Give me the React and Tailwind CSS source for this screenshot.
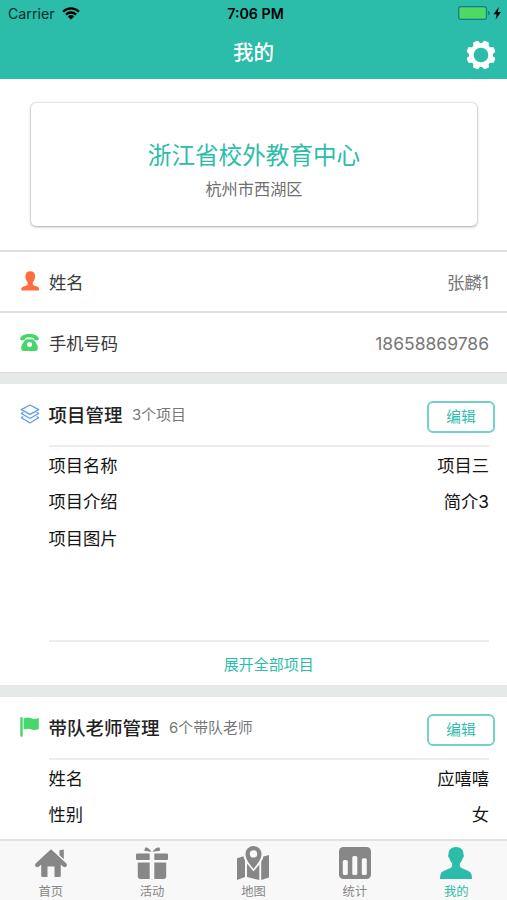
import React, { useState } from 'react';

const UserIcon = ({ className }) => (
  <svg viewBox="0 0 32 32" fill="currentColor" className={className}>
    <path d="M16 0C11.300 0 8.300 2.900 8.600 7.200C8 7.500 8 9.300 8.500 10.300C8.800 11 9.300 11.200 9.500 11.600C10 13.700 10.900 15 12 16.100C12.300 17.900 12.200 19.500 11.300 20.600C8.500 22.600 1.800 23.600 .6 27.200C.1 28.900 0 30.500 0 32H32C32 30.500 31.900 28.900 31.400 27.200C30.200 23.600 23.500 22.600 20.700 20.600C19.800 19.500 19.700 17.900 20 16.100C21.100 15 22 13.700 22.500 11.600C22.700 11.200 23.200 11 23.500 10.300C24 9.300 24 7.500 23.400 7.200C23.700 2.900 20.700 0 16 0Z" />
  </svg>
);

const PersonIcon = () => (
  <svg viewBox="0 0 18 20" fill="currentColor" className="ml-[0.500px] mb-[4px] w-[18.500px] h-5 text-[#ff6c3e]">
    <path d="M9 .2C6 .2 4.200 2 4.200 5C4.200 8 5.100 10 6.400 11.200V13.300C6.400 14.500 5 14.800 3 15.300C1 15.800 0 16.900 0 18.300C0 19.200 .3 19.600 1 19.600H17C17.700 19.600 18 19.200 18 18.300C18 16.900 17 15.800 15 15.300C13 14.800 11.600 14.500 11.600 13.300V11.200C12.900 10 13.800 8 13.800 5C13.800 2 12 .2 9 .2Z" />
  </svg>
);

const PhoneIcon = () => (
  <svg viewBox="0 0 19 17" fill="currentColor" className="mb-[3px] w-[19px] h-[17px] text-[#46d66c]">
    <path d="M9.500 0C4.200 0 .8 2 .2 4.500C0 5.700 .5 6.200 1.300 6.200H3.800C4.700 6.200 5 5.600 5.100 4.700C5.200 4 7 3.600 9.500 3.600C12 3.600 13.800 4 13.900 4.700C14 5.600 14.300 6.200 15.200 6.200H17.700C18.500 6.200 19 5.700 18.800 4.500C18.200 2 14.800 0 9.500 0Z" />
    <path
      fillRule="evenodd"
      d="M7 5.300H12C13.500 5.300 14.300 6.800 15.500 8.300C17 10.200 17.800 11.800 17.800 14C17.800 16 17 17 15.200 17H3.800C2 17 1.200 16 1.200 14C1.200 11.800 2 10.200 3.500 8.300C4.700 6.800 5.500 5.300 7 5.300ZM9.500 8A2.500 2.500 0 1 0 9.500 13A2.500 2.500 0 1 0 9.500 8Z"
    />
  </svg>
);

const LayersIcon = () => (
  <svg
    viewBox="0 0 20 20"
    fill="none"
    stroke="currentColor"
    strokeWidth="1.200"
    strokeLinejoin="round"
    strokeLinecap="round"
    className="mb-[2px] w-5 h-5 text-[#5b9bf0]"
  >
    <path d="M10 1L18.700 5.600L10 10.400L1.300 5.600Z" />
    <path d="M3 8.500L1.300 9.500L10 14.500L18.700 9.500L17 8.500" />
    <path d="M3 12.800L1.300 13.800L10 19L18.700 13.800L17 12.800" />
  </svg>
);

const FlagIcon = () => (
  <svg viewBox="0 0 19 20" fill="currentColor" className="mb-[2px] w-[19px] h-5 text-[#46d66c]">
    <rect x="0.300" y="0.300" width="2.400" height="19.400" rx="0.600" />
    <path d="M3.600 1.400C6.500 .1 8.600 .2 11 1.300C13.500 2.300 15.500 2.100 18.800 1V12C15.500 13.200 13.300 13.200 10.800 12.300C8.500 11.400 6.500 11.400 3.600 12.400Z" />
  </svg>
);

const GearIcon = () => (
  <svg viewBox="-15 -15 30 30" className="w-[30px] h-[30px] text-white">
    <g fill="currentColor">
      {[22.5, 67.5, 112.5, 157.5, 202.5, 247.5, 292.5, 337.5].map((angle) => (
        <path
          key={angle}
          transform={`rotate(${angle})`}
          d="M-5.200 -10.300C-3.500 -11 -3.200 -12 -3 -13.300Q-2.700 -14.700 -1.400 -14.700H1.400Q2.700 -14.700 3 -13.300C3.200 -12 3.500 -11 5.200 -10.300Z"
        />
      ))}
    </g>
    <circle r="9.500" fill="none" stroke="currentColor" strokeWidth="4.400" />
  </svg>
);

const WifiIcon = () => (
  <svg viewBox="0 0 18 13" className="w-[18px] h-[13px] text-black">
    <g fill="none" stroke="currentColor" strokeWidth="2.300">
      <path d="M1.100 4.700A11.200 11.200 0 0 1 16.900 4.700" />
      <path d="M3.900 7.600A7.200 7.200 0 0 1 14.100 7.600" />
    </g>
    <path fill="currentColor" d="M9 12.600L5.800 9.400A4.500 4.500 0 0 1 12.200 9.400Z" />
  </svg>
);

const BatteryIcon = () => (
  <svg viewBox="0 0 44 14" className="mb-px w-[44px] h-[14px]">
    <rect x="0.600" y="0.600" width="28" height="12.800" rx="2.400" fill="none" stroke="#1d8076" strokeWidth="1.100" />
    <rect x="1.800" y="1.800" width="25.600" height="10.400" rx="1" fill="#4cd964" />
    <path d="M30 4.800Q31.800 5.300 31.800 7T30 9.200Z" fill="#1d8076" />
    <path d="M40.800 1L35.500 8.200H38.700L37.600 13.400L43 6H39.800Z" fill="#000" />
  </svg>
);

const HomeIcon = () => (
  <svg viewBox="0 0 32 32" fill="currentColor" className="w-8 h-8">
    <path d="M16 2.200L.6 16.500C-.3 17.500 0 19 1 19.800C2 20.400 3 20.300 4 19.400L6.200 17.500V28.500Q6.200 30 7.700 30H12.500V19.500H19.500V30H24.300Q25.800 30 25.800 28.500V17.500L28 19.400C29 20.300 30 20.400 31 19.800C32 19 32.300 17.500 31.400 16.500Z" />
    <path d="M24.500 3.200L28.800 2.500V12.200L24.500 8.200Z" />
  </svg>
);

const GiftIcon = () => (
  <svg viewBox="0 0 32 32" fill="currentColor" className="w-8 h-8">
    <path d="M15.200 4.300C13 1.200 10.800 -.2 9.200 .8L8.300 3.800L15.200 4.800Z" />
    <path d="M16.800 4.300C19 1.200 21.500 -.2 23.800 .8L24 3.800L16.800 4.800Z" />
    <path d="M1 6.600H13.700V13H1Q0 13 0 12V7.600Q0 6.600 1 6.600Z" />
    <path d="M18.300 6.600H31Q32 6.600 32 7.600V12Q32 13 31 13H18.300Z" />
    <path d="M1.800 15.600H13.700V32H4.500Q1.800 32 1.800 29.300Z" />
    <path d="M18.300 15.600H30.200V29.300Q30.200 32 27.500 32H18.300Z" />
  </svg>
);

const MapIcon = () => (
  <svg viewBox="0 0 32 34" fill="currentColor" className="w-8 h-[34px]">
    <path
      fillRule="evenodd"
      d="M16.500 0A8 8 0 0 0 8.500 8C8.500 13.500 13 18.500 16.500 23C20 18.500 24.500 13.500 24.500 8A8 8 0 0 0 16.500 0ZM16.500 4.200A3.700 3.700 0 1 1 16.500 11.600A3.700 3.700 0 1 1 16.500 4.200Z"
    />
    <path d="M6.500 10.300L0 12.200V34L8 31V14.500Q6.800 12.500 6.500 10.300Z" />
    <path d="M10 17.500L16.500 25.500L22.300 18.500V34L10 31Z" />
    <path d="M24.200 15.800Q26.300 12.600 26.400 10.500L32 9V31.500L24.200 34Z" />
  </svg>
);

const StatsIcon = () => (
  <svg viewBox="0 0 32 32" className="w-8 h-8">
    <rect width="32" height="32" rx="4.500" fill="currentColor" />
    <g fill="#f8f8f8">
      <rect x="3.800" y="13" width="5" height="15" rx="1.500" />
      <rect x="13.300" y="9" width="5" height="19" rx="1.500" />
      <rect x="22.800" y="11.300" width="5" height="16.700" rx="1.500" />
    </g>
  </svg>
);

const profile = [
  { icon: <PersonIcon />, label: '姓名', value: '张麟1' },
  { icon: <PhoneIcon />, label: '手机号码', value: '18658869786' }
];

const tabs = [
  { key: 'home', label: '首页', icon: <HomeIcon /> },
  { key: 'activity', label: '活动', icon: <GiftIcon /> },
  { key: 'map', label: '地图', icon: <MapIcon /> },
  { key: 'stats', label: '统计', icon: <StatsIcon /> },
  { key: 'mine', label: '我的', icon: <UserIcon className="w-8 h-8" /> }
];

const SectionHeader = ({ icon, title, count }) => (
  <div className="flex h-[61px] shrink-0 items-center pl-5 pr-3">
    <span className="flex w-[28.500px] shrink-0">{icon}</span>
    <h2 className="pt-[2px] text-[18.500px] font-medium text-[#222]">{title}</h2>
    <span className="ml-[9.500px] pt-[2px] text-[14.900px] text-[#777]">{count}</span>
    <button className="mt-1 ml-auto flex h-8 w-[68px] items-center justify-center rounded-[6px] border-2 border-[#74d1c5] pt-[2px] text-[14.700px] text-[#2cbcaa]">
      编辑
    </button>
  </div>
);

const DetailRow = ({ label, value }) => (
  <div className="flex h-[36.700px] items-center justify-between text-[17.300px] text-[#151515]">
    <span>{label}</span>
    <span>{value}</span>
  </div>
);

const App = () => {
  const [activeTab, setActiveTab] = useState('mine');

  return (
    <div className="flex h-[900px] w-[507px] flex-col overflow-hidden bg-white font-['Inter','Noto_Sans_CJK_SC',sans-serif] leading-none">
      {/* Header */}
      <header className="h-[79px] shrink-0 bg-[#2cbcaa]">
        <div className="grid h-[27px] grid-cols-3 items-center pl-2 pr-[5px] text-[14px] text-black">
          <div className="flex items-center gap-[7px]">
            <span className="pt-px text-[14.200px] text-[#082d29]">Carrier</span>
            <WifiIcon />
          </div>
          <span className="pt-px pl-px text-center text-[14.200px] font-semibold">7:06 PM</span>
          <div className="flex justify-end">
            <BatteryIcon />
          </div>
        </div>
        <div className="grid h-[52px] grid-cols-3 items-center pr-[11px] pl-[11px]">
          <span />
          <h1 className="text-center text-[20.500px] font-medium text-white">我的</h1>
          <div className="flex justify-end pt-1">
            <GearIcon />
          </div>
        </div>
      </header>

      <main className="flex min-h-0 flex-1 flex-col overflow-hidden">
        {/* Organization card */}
        <div className="h-[171px] shrink-0 pr-[30px] pl-[31px] pt-6">
          <div className="flex h-[123px] flex-col items-center rounded-[5px] pt-[41px] shadow-[0_0_2px_rgba(0,0,0,0.25),0_1px_3px_rgba(0,0,0,0.28)]">
            <p className="text-[23.600px] text-[#2cbcaa]">浙江省校外教育中心</p>
            <p className="mt-[13px] text-[16.200px] text-[#707070]">杭州市西湖区</p>
          </div>
        </div>

        {/* Profile */}
        {profile.map((item) => (
          <div key={item.label} className="flex h-[61px] shrink-0 items-center border-t-2 border-[#dfdfdf] pt-[2px] pr-[18px] pl-5 text-[17.300px]">
            <span className="flex w-[29px]">{item.icon}</span>
            <span className="text-[#3a3a3a]">{item.label}</span>
            <span className="ml-auto text-[17.500px] text-[#777]">{item.value}</span>
          </div>
        ))}
        <div className="h-3 shrink-0 border-t border-[#d9dcdb] bg-[#e5e9e8]" />

        {/* Projects */}
        <SectionHeader icon={<LayersIcon />} title="项目管理" count="3个项目" />
        <div className="mr-[18px] ml-[48.500px] h-[195px] shrink-0 border-t-2 border-[#ececec]">
          <DetailRow label="项目名称" value="项目三" />
          <DetailRow label="项目介绍" value="简介3" />
          <DetailRow label="项目图片" />
        </div>
        <button className="mr-[18px] ml-[48.500px] flex h-[45px] shrink-0 items-center justify-center border-t-2 border-[#ececec] pt-px text-[15px] text-[#2cbcaa]">
          展开全部项目
        </button>
        <div className="h-3 shrink-0 bg-[#e5e9e8]" />

        {/* Teachers */}
        <SectionHeader icon={<FlagIcon />} title="带队老师管理" count="6个带队老师" />
        <div className="mr-[18px] ml-[48.500px] shrink-0 border-t-2 border-[#ececec]">
          <DetailRow label="姓名" value="应嘻嘻" />
          <DetailRow label="性别" value="女" />
        </div>
      </main>

      {/* Tab bar */}
      <nav className="grid h-[61px] shrink-0 grid-cols-5 border-t-2 border-[#e2e2e2] bg-[#f8f8f8]">
        {tabs.map((tab) => (
          <button
            key={tab.key}
            onClick={() => setActiveTab(tab.key)}
            className={`flex flex-col items-center justify-between pt-[5px] pb-[2px] ${
              activeTab === tab.key ? 'text-[#2cbcaa]' : 'text-[#878787]'
            }`}
          >
            <span className="flex h-[34px] items-center">{tab.icon}</span>
            <span className="text-[12.300px]">{tab.label}</span>
          </button>
        ))}
      </nav>
    </div>
  );
};

export default App;
